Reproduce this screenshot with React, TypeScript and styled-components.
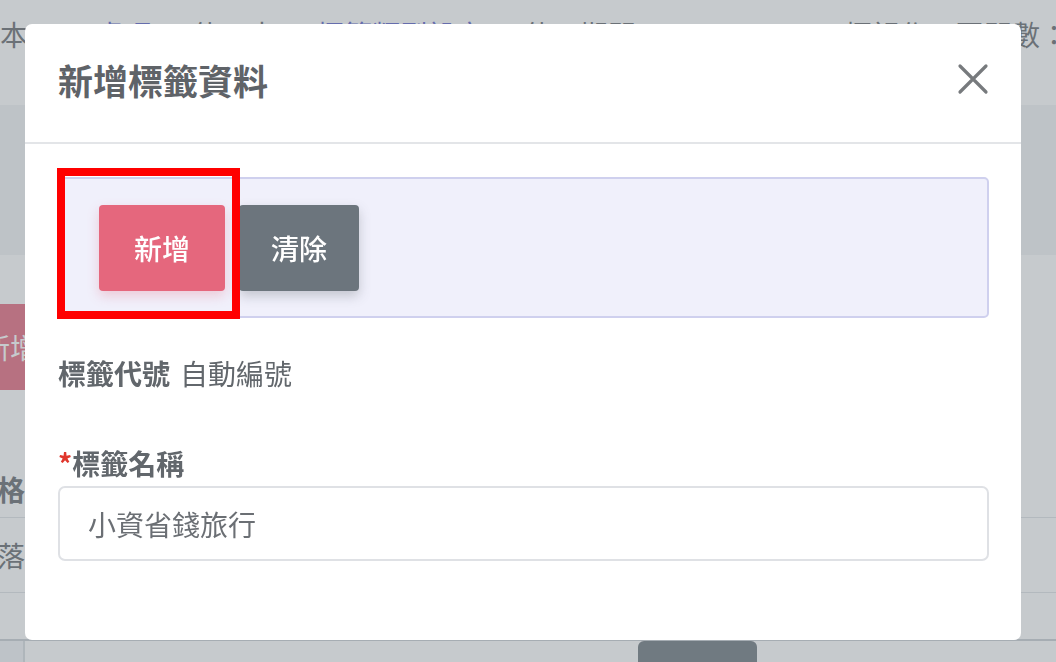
import React from "react";
import styled, { createGlobalStyle } from "styled-components";

const Global = createGlobalStyle`
  html, body { margin: 0; padding: 0; }
  body {
    width: 1056px;
    height: 662px;
    overflow: hidden;
    background: #ffffff;
    font-family: "Noto Sans CJK TC", "Noto Sans", sans-serif;
  }
  * { box-sizing: border-box; }
`;

/* ---------- background page ---------- */
const Page = styled.div`
  width: 1056px;
  height: 662px;
  display: flex;
  flex-direction: column;
  color: #62676c;
  overflow: hidden;
`;

const TopBar = styled.div`
  height: 105px;
  display: flex;
  align-items: flex-start;
  justify-content: space-between;
  padding-top: 14px;
  margin-right: -12px;
  font-size: 28px;
  white-space: nowrap;
`;

const TopGroup = styled.div`
  display: flex;
  gap: 40px;
`;

const TopLink = styled.span<{ $link?: boolean }>`
  color: ${(p) => (p.$link ? "#5a5fc9" : "#62676c")};
`;

const Band = styled.div`
  height: 150px;
  background: #f2f3f5;
`;

const ActionArea = styled.div`
  height: 185px;
  display: flex;
  align-items: flex-start;
  padding-top: 49px;
  margin-left: -50px;
`;

const BgButton = styled.div`
  width: 120px;
  height: 86px;
  background: #e5677d;
  color: #fff;
  font-size: 28px;
  display: flex;
  align-items: center;
  justify-content: center;
  border-radius: 4px;
`;

const Table = styled.div`
  display: flex;
  flex-direction: column;
  margin-left: -3px;
`;

const TableRow = styled.div<{ $head?: boolean }>`
  height: ${(p) => (p.$head ? "78px" : "75px")};
  display: flex;
  align-items: ${(p) => (p.$head ? "flex-end" : "center")};
  padding-bottom: ${(p) => (p.$head ? "8px" : "0")};
  border-bottom: 1px solid #dee2e6;
  font-size: 28px;
  font-weight: ${(p) => (p.$head ? 700 : 400)};
`;

const TableSpacer = styled.div`
  height: 48px;
  border-bottom: 2px solid #c9ced3;
`;

const Footer = styled.div`
  flex: 1;
  display: flex;
`;

const FooterCell = styled.div`
  width: 25px;
  border-right: 2px solid #d8dce0;
  background: #f2f3f6;
`;

const FooterButton = styled.div`
  margin-left: 613px;
  width: 119px;
  background: #6c757d;
  border-radius: 6px 6px 0 0;
`;

/* ---------- modal ---------- */
const Backdrop = styled.div`
  position: fixed;
  inset: 0;
  background: rgba(120, 128, 136, 0.42);
  padding: 24px 0 0 25px;
`;

const Modal = styled.div`
  position: relative;
  width: 996px;
  height: 616px;
  background: #ffffff;
  border-radius: 7px;
  display: flex;
  flex-direction: column;
`;

const Header = styled.div`
  height: 120px;
  display: flex;
  align-items: center;
  justify-content: space-between;
  padding: 0 30px 8px 33px;
  border-bottom: 2px solid #e3e5e8;
`;

const Title = styled.h5`
  margin: 0;
  font-size: 35px;
  font-weight: 700;
  color: #5f6368;
  line-height: 1;
`;

const CloseButton = styled.button`
  width: 36px;
  height: 36px;
  padding: 0;
  border: 0;
  background: transparent;
  display: flex;
  align-items: center;
  justify-content: center;
`;

const Body = styled.div`
  padding: 33px 32px 0 33px;
  display: flex;
  flex-direction: column;
`;

const ButtonBox = styled.div`
  height: 141px;
  background: #f0f0fb;
  border: 2px solid #cfd0ee;
  border-radius: 5px;
  display: flex;
  align-items: center;
  padding-left: 39px;
  gap: 14px;
`;

const Btn = styled.button<{ $variant: "primary" | "secondary" }>`
  height: 86px;
  padding: 0 ${(p) => (p.$variant === "primary" ? "35px" : "32px")};
  border: 0;
  border-radius: 4px;
  font-family: inherit;
  font-size: 28px;
  font-weight: 500;
  color: #ffffff;
  background: ${(p) => (p.$variant === "primary" ? "#e5677d" : "#6c757d")};
  box-shadow: 0 5px 12px rgba(${(p) => (p.$variant === "primary" ? "229,103,125" : "80,86,92")}, 0.28);
`;

const Highlight = styled.div`
  position: absolute;
  left: 32px;
  top: 144px;
  width: 183px;
  height: 151px;
  border: 8px solid #ff0000;
  pointer-events: none;
`;

const InfoRow = styled.div`
  margin-top: 35px;
  font-size: 28px;
  color: #62676c;
  line-height: 40px;
  display: flex;
  gap: 10px;
`;

const Strong = styled.span`
  font-weight: 700;
`;

const FieldLabel = styled.label`
  margin-top: 50px;
  font-size: 28px;
  font-weight: 700;
  color: #62676c;
  line-height: 40px;
`;

const Required = styled.span`
  color: #e0362c;
`;

const Input = styled.input`
  margin-top: 3px;
  height: 75px;
  width: 931px;
  border: 2px solid #dfe1e5;
  border-radius: 7px;
  padding: 0 28px;
  font-family: inherit;
  font-size: 28px;
  color: #6b6f74;
  background: #fff;
  outline: none;
`;

export default function App() {
  return (
    <>
      <Global />
      <Page>
        <TopBar>
          <TopGroup>
            <TopLink>本</TopLink>
            <TopLink $link>已處理</TopLink>
            <TopLink>使用中</TopLink>
            <TopLink $link>標籤類型設定</TopLink>
            <TopLink>使用期間</TopLink>
          </TopGroup>
          <TopLink>標記作用區間數：</TopLink>
        </TopBar>
        <Band />
        <ActionArea>
          <BgButton>新增</BgButton>
        </ActionArea>
        <Table>
          <TableRow $head>格</TableRow>
          <TableRow>落</TableRow>
        </Table>
        <TableSpacer />
        <Footer>
          <FooterCell />
          <FooterButton />
        </Footer>
      </Page>

      <Backdrop>
        <Modal>
          <Header>
            <Title>新增標籤資料</Title>
            <CloseButton aria-label="close">
              <svg width="32" height="32" viewBox="0 0 32 32">
                <path d="M3 3 L29 29 M29 3 L3 29" stroke="#777a7d" strokeWidth="3.2" strokeLinecap="round" />
              </svg>
            </CloseButton>
          </Header>
          <Body>
            <ButtonBox>
              <Btn $variant="primary">新增</Btn>
              <Btn $variant="secondary">清除</Btn>
            </ButtonBox>
            <InfoRow>
              <Strong>標籤代號</Strong>
              <span>自動編號</span>
            </InfoRow>
            <FieldLabel>
              <Required>*</Required>標籤名稱
            </FieldLabel>
            <Input defaultValue="小資省錢旅行" />
          </Body>
          <Highlight />
        </Modal>
      </Backdrop>
    </>
  );
}
